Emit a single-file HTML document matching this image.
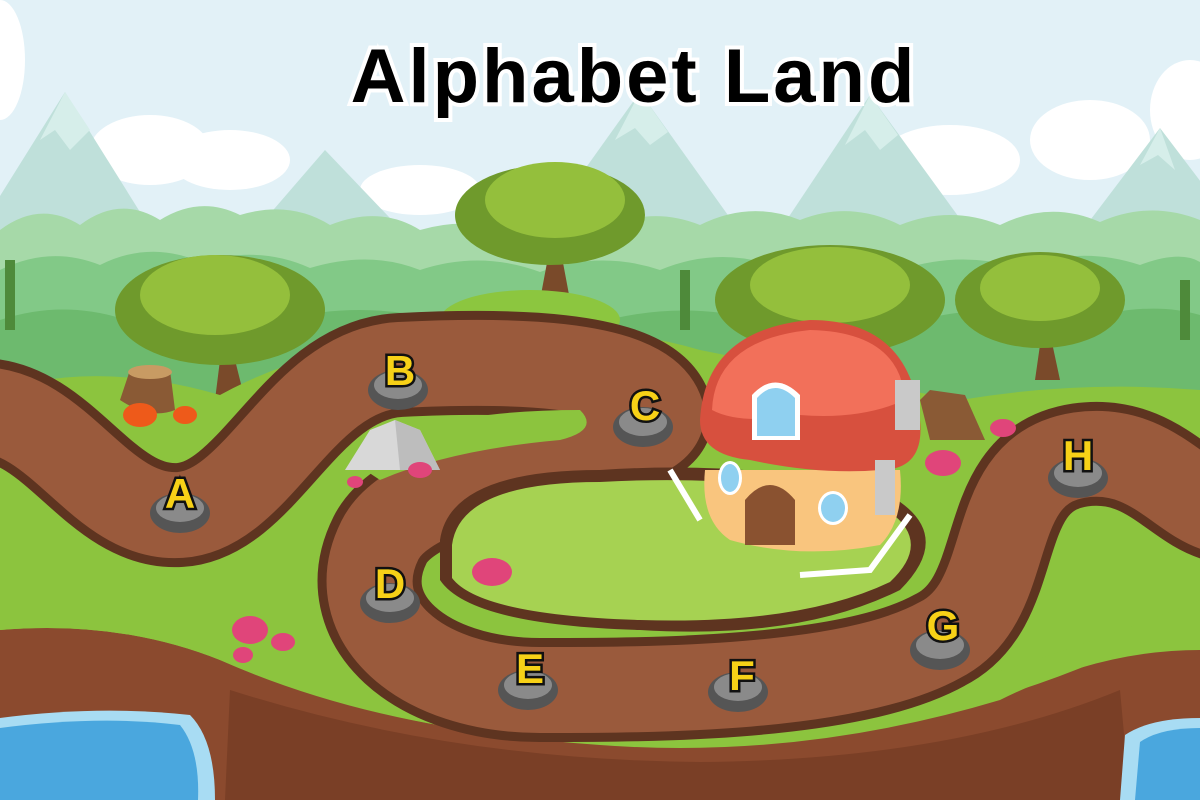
<!DOCTYPE html>
<html><head><meta charset="utf-8"><style>
html,body{margin:0;padding:0;width:1200px;height:800px;overflow:hidden;background:#e2f1f7}
svg{display:block}
</style></head><body>
<svg width="1200" height="800" viewBox="0 0 1200 800" xmlns="http://www.w3.org/2000/svg">
<rect width="1200" height="800" fill="#e2f1f7"/>
<g fill="#ffffff">
<ellipse cx="0" cy="60" rx="25" ry="60"/>
<ellipse cx="150" cy="150" rx="60" ry="35"/><ellipse cx="230" cy="160" rx="60" ry="30"/>
<ellipse cx="950" cy="160" rx="70" ry="35"/><ellipse cx="1090" cy="140" rx="60" ry="40"/>
<ellipse cx="1190" cy="110" rx="40" ry="50"/>
<ellipse cx="420" cy="190" rx="60" ry="25"/>
</g>
<g fill="#bfe0da">
<polygon points="-40,260 65,92 170,260"/>
<polygon points="230,260 325,150 430,260"/>
<polygon points="520,260 640,92 760,260"/>
<polygon points="760,260 870,95 990,260"/>
<polygon points="1060,260 1160,128 1260,260"/>
</g>
<g fill="#d6eeea">
<polygon points="65,92 40,140 55,130 70,150 90,130"/>
<polygon points="640,92 615,140 635,128 650,145 668,132"/>
<polygon points="870,95 845,145 865,130 880,150 898,135"/>
<polygon points="1160,128 1140,165 1158,155 1175,170"/>
</g>
<path d="M0,230 Q40,200 80,225 Q120,195 160,220 Q200,195 240,215 Q290,200 330,225 Q380,205 420,230 Q470,215 520,235 Q560,210 600,230 Q650,205 700,225 Q750,200 800,220 Q850,200 900,225 Q950,205 1000,225 Q1050,200 1100,222 Q1150,200 1200,220 L1200,420 L0,420Z" fill="#a6d9a8"/>
<path d="M0,270 Q50,245 100,265 Q150,240 200,262 Q260,245 310,268 Q370,250 420,270 Q480,250 540,272 Q600,250 660,270 Q720,245 780,268 Q840,248 900,270 Q960,250 1020,268 Q1080,245 1140,265 Q1180,250 1200,262 L1200,420 L0,420Z" fill="#82c987"/>
<path d="M0,320 Q60,300 120,318 Q200,300 280,320 Q360,300 440,320 Q520,300 600,322 Q680,300 760,320 Q840,300 920,320 Q1000,300 1080,320 Q1150,300 1200,315 L1200,440 L0,440Z" fill="#6dba6e"/>
<g fill="#4e8a3a"><rect x="5" y="260" width="10" height="70"/><rect x="680" y="270" width="10" height="60"/><rect x="1180" y="280" width="10" height="60"/></g>
<g>
<path d="M540,300 L555,220 L570,300Z" fill="#7a4a2a"/>
<ellipse cx="550" cy="215" rx="95" ry="50" fill="#6f9a2c"/>
<ellipse cx="555" cy="200" rx="70" ry="38" fill="#94bf3c"/>
<path d="M215,400 L225,320 L245,400Z" fill="#7a4a2a"/>
<ellipse cx="220" cy="310" rx="105" ry="55" fill="#6f9a2c"/>
<ellipse cx="215" cy="295" rx="75" ry="40" fill="#94bf3c"/>
<path d="M1035,380 L1045,310 L1060,380Z" fill="#7a4a2a"/>
<ellipse cx="1040" cy="300" rx="85" ry="48" fill="#6f9a2c"/>
<ellipse cx="1040" cy="288" rx="60" ry="33" fill="#94bf3c"/>
<ellipse cx="830" cy="300" rx="115" ry="55" fill="#6f9a2c"/>
<ellipse cx="830" cy="285" rx="80" ry="38" fill="#94bf3c"/>
</g>
<ellipse cx="530" cy="320" rx="90" ry="30" fill="#8cc63f"/>
<path d="M0,390 Q100,360 220,395 Q320,340 460,335 Q600,320 700,350 Q850,380 960,400 Q1080,380 1200,390 L1200,800 L0,800Z" fill="#8cc43e"/>
<path d="M0,630 Q120,620 220,660 L230,800 L0,800Z" fill="#8b4a2e"/>
<path d="M220,660 Q400,740 650,745 Q900,745 1100,660 Q1150,640 1200,650 L1200,800 L220,800Z" fill="#8b4a2e"/>
<path d="M230,690 Q450,760 700,762 Q950,760 1120,690 L1130,800 L225,800Z" fill="#7a3f26"/>
<path d="M0,460 Q150,560 330,540 Q340,650 460,700 Q650,740 900,700 Q1050,660 1200,600 L1200,650 Q1100,650 1000,700 Q800,760 600,745 Q380,730 220,660 Q120,620 0,630Z" fill="#8cc43e"/>
<path d="M-20,410 C60,410 100,520 180,515 C260,510 300,370 400,365 C500,360 640,360 660,410 C680,460 420,460 380,540 C340,620 420,690 540,690 C650,690 850,690 940,640 C1020,600 980,470 1080,455 C1150,445 1180,500 1220,510" fill="none" stroke="#5e3420" stroke-width="104" stroke-linecap="round"/>
<path d="M-20,410 C60,410 100,520 180,515 C260,510 300,370 400,365 C500,360 640,360 660,410 C680,460 420,460 380,540 C340,620 420,690 540,690 C650,690 850,690 940,640 C1020,600 980,470 1080,455 C1150,445 1180,500 1220,510" fill="none" stroke="#9a5a3c" stroke-width="86" stroke-linecap="round"/>
<path d="M440,540 Q450,470 600,470 Q750,460 880,490 Q960,530 900,590 Q800,640 640,630 Q470,625 440,580Z" fill="#5e3420"/>
<path d="M452,545 Q460,482 600,482 Q745,474 870,500 Q940,535 890,582 Q800,625 640,620 Q480,615 452,578Z" fill="#a6d252"/>
<path d="M350,460 Q420,410 580,410 Q600,430 560,440 Q450,450 380,480Z" fill="#8cc43e"/>
<path d="M345,470 L370,430 L395,420 L420,430 L440,470Z" fill="#d8d8d8"/>
<path d="M395,420 L400,470 L440,470 L420,430Z" fill="#bdbdbd"/>
<path d="M120,400 L130,370 L170,370 L175,410 Q150,420 120,400Z" fill="#8a5a35"/>
<ellipse cx="150" cy="372" rx="22" ry="7" fill="#c89b63"/>
<path d="M920,400 L930,390 L965,395 L985,440 L930,440Z" fill="#8a5a35"/>
<path d="M705,470 Q700,520 730,540 Q800,560 880,545 Q905,520 900,470Z" fill="#f9c57e"/>
<path d="M745,545 L745,500 Q770,470 795,500 L795,545Z" fill="#8a5230"/>
<ellipse cx="730" cy="478" rx="12" ry="17" fill="#fff"/><ellipse cx="730" cy="478" rx="9" ry="14" fill="#8fd0f0"/>
<ellipse cx="833" cy="508" rx="15" ry="17" fill="#fff"/><ellipse cx="833" cy="508" rx="12" ry="14" fill="#8fd0f0"/>
<path d="M700,420 Q705,330 810,320 Q910,320 920,420 Q925,470 880,470 Q820,475 750,460 Q700,455 700,420Z" fill="#d7503e"/>
<path d="M712,410 Q715,340 810,330 Q900,332 905,400 Q860,420 800,415 Q740,425 712,410Z" fill="#f2705a"/>
<path d="M752,440 L752,395 Q775,370 800,395 L800,440Z" fill="#fff"/>
<path d="M757,436 L757,398 Q775,378 795,398 L795,436Z" fill="#8fd0f0"/>
<rect x="895" y="380" width="25" height="50" fill="#c9c9c9"/>
<rect x="875" y="460" width="20" height="55" fill="#c9c9c9"/>
<g stroke="#fff" stroke-width="6" fill="none"><path d="M670,470 L700,520"/><path d="M800,575 L870,570 L910,515"/></g>
<g fill="#e0457a"><ellipse cx="492" cy="572" rx="20" ry="14"/><ellipse cx="250" cy="630" rx="18" ry="14"/><ellipse cx="283" cy="642" rx="12" ry="9"/><ellipse cx="943" cy="463" rx="18" ry="13"/><ellipse cx="1003" cy="428" rx="13" ry="9"/><ellipse cx="420" cy="470" rx="12" ry="8"/><ellipse cx="355" cy="482" rx="8" ry="6"/><ellipse cx="243" cy="655" rx="10" ry="8"/></g>
<g fill="#ee5a1a"><ellipse cx="140" cy="415" rx="17" ry="12"/><ellipse cx="185" cy="415" rx="12" ry="9"/></g>
<path d="M0,718 Q100,705 190,715 Q215,740 215,800 L0,800Z" fill="#a8dcf3"/>
<path d="M0,728 Q100,715 180,725 Q200,750 198,800 L0,800Z" fill="#4aa7de"/>
<path d="M1200,718 Q1150,718 1125,735 L1120,800 L1200,800Z" fill="#a8dcf3"/>
<path d="M1200,728 Q1160,728 1140,742 L1135,800 L1200,800Z" fill="#4aa7de"/>
<g fill="#555">
<ellipse cx="180" cy="513" rx="30" ry="20"/><ellipse cx="398" cy="390" rx="30" ry="20"/><ellipse cx="643" cy="427" rx="30" ry="20"/><ellipse cx="390" cy="603" rx="30" ry="20"/><ellipse cx="528" cy="690" rx="30" ry="20"/><ellipse cx="738" cy="692" rx="30" ry="20"/><ellipse cx="940" cy="650" rx="30" ry="20"/><ellipse cx="1078" cy="478" rx="30" ry="20"/>
</g>
<g fill="#8a8a8a">
<ellipse cx="180" cy="508" rx="24" ry="14"/><ellipse cx="398" cy="385" rx="24" ry="14"/><ellipse cx="643" cy="422" rx="24" ry="14"/><ellipse cx="390" cy="598" rx="24" ry="14"/><ellipse cx="528" cy="685" rx="24" ry="14"/><ellipse cx="738" cy="687" rx="24" ry="14"/><ellipse cx="940" cy="645" rx="24" ry="14"/><ellipse cx="1078" cy="473" rx="24" ry="14"/>
</g>
<g font-family="Liberation Sans, sans-serif" font-weight="bold" font-size="42" fill="#f7d117" stroke="#111" stroke-width="5" paint-order="stroke" text-anchor="middle">
<text x="180" y="508">A</text><text x="400" y="385">B</text><text x="645" y="420">C</text><text x="390" y="598">D</text><text x="530" y="683">E</text><text x="742" y="690">F</text><text x="943" y="640">G</text><text x="1078" y="470">H</text>
</g>
<text x="634" y="102" font-family="Liberation Sans, sans-serif" font-weight="bold" font-size="76" letter-spacing="3" fill="#000" stroke="#fff" stroke-width="8" paint-order="stroke" text-anchor="middle">Alphabet Land</text>
</svg>
</body></html>
